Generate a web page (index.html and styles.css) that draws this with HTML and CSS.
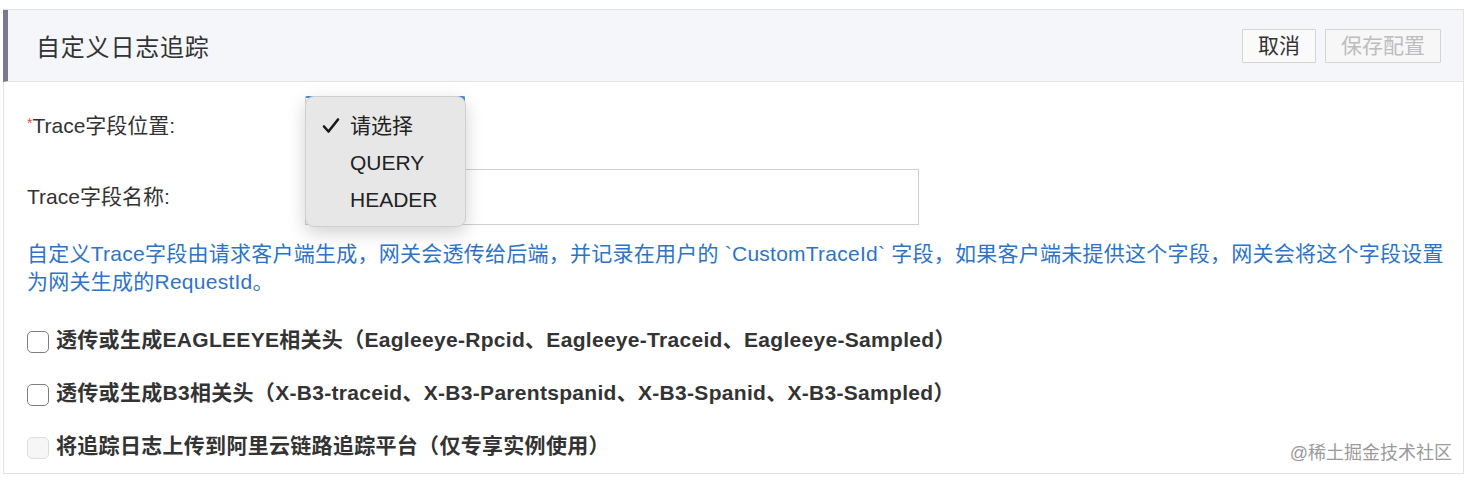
FILE: index.html
```html
<!DOCTYPE html>
<html lang="zh-CN">
<head>
<meta charset="utf-8">
<title>自定义日志追踪</title>
<link rel="stylesheet" href="styles.css">
</head>
<body>
<div class="panel">
  <div class="panel-header">
    <h2 class="panel-title">自定义日志追踪</h2>
    <div class="actions">
      <button class="btn">取消</button>
      <button class="btn" disabled>保存配置</button>
    </div>
  </div>
  <div class="panel-body">
    <div class="form-row row-select">
      <label class="form-label"><span class="req">*</span>Trace字段位置:</label>
      <div class="select-wrap">
        <div class="select"></div>
        <ul class="menu">
          <li class="menu-item checked">
            <svg class="check" viewBox="0 0 20 20" width="20" height="20"><path d="M3 10.5 L7.5 15.5 L17 3.5" fill="none" stroke="#1a1a1a" stroke-width="2.6" stroke-linecap="round" stroke-linejoin="round"/></svg>
            <span>请选择</span>
          </li>
          <li class="menu-item"><span>QUERY</span></li>
          <li class="menu-item"><span>HEADER</span></li>
        </ul>
      </div>
    </div>
    <div class="form-row row-input">
      <label class="form-label">Trace字段名称:</label>
      <div class="input"></div>
    </div>
    <p class="help">自定义Trace字段由请求客户端生成，网关会透传给后端，并记录在用户的 `CustomTraceId` 字段，如果客户端未提供这个字段，网关会将这个字段设置为网关生成的RequestId。</p>
    <div class="checks">
      <label class="check-row"><span class="box"></span><span class="check-text">透传或生成EAGLEEYE相关头（Eagleeye-Rpcid、Eagleeye-Traceid、Eagleeye-Sampled）</span></label>
      <label class="check-row"><span class="box"></span><span class="check-text">透传或生成B3相关头（X-B3-traceid、X-B3-Parentspanid、X-B3-Spanid、X-B3-Sampled）</span></label>
      <label class="check-row disabled"><span class="box"></span><span class="check-text">将追踪日志上传到阿里云链路追踪平台（仅专享实例使用）</span></label>
    </div>
    <div class="watermark">@稀土掘金技术社区</div>
  </div>
</div>
</body>
</html>
```

FILE: styles.css
```css
* { box-sizing: border-box; }
body {
  margin: 0;
  background: #fff;
  font-family: "Liberation Sans", "Noto Sans CJK SC", sans-serif;
  color: #333;
}
.panel {
  margin: 9px 0 0 3px;
  width: 1461px;
  border: 1px solid #e3e3e3;
}
.panel-header {
  height: 72px;
  background: #f5f6f9;
  border-left: 5px solid #7b798d;
  margin-left: -1px;
  border-bottom: 1px solid #e2e3e6;
  display: flex;
  align-items: center;
  justify-content: space-between;
  padding: 0 22px 0 28px;
}
.panel-title {
  margin: 0;
  font-size: 24px;
  font-weight: normal;
  color: #333;
  letter-spacing: 0.8px;
}
.actions { display: flex; gap: 9px; margin-top: 1px; }
.btn {
  height: 34px;
  padding: 0 15px;
  font-family: inherit;
  font-size: 21px;
  line-height: 32px;
  color: #333;
  background: #fafafa;
  border: 1px solid #d4d4d4;
  border-radius: 1px;
}
.btn[disabled] { color: #bdbdbd; background: #f7f7f7; }
.panel-body {
  position: relative;
  padding: 14px 6px 13px 23px;
}
.form-row {
  display: grid;
  grid-template-columns: 278px 1fr;
  align-items: center;
}
.form-label { font-size: 21px; color: #333; line-height: 28px; }
.req { color: #e5484d; font-size: 14px; vertical-align: 5px; }
.row-select { height: 57px; }
.row-input { height: 56px; margin-top: 16px; }
.select-wrap { position: relative; height: 57px; }
.select {
  width: 160px;
  height: 57px;
  border: 1px solid #d0d0d0;
  border-right: 2px solid #4b8ed1;
  border-top: 2px solid #4b8ed1;
  border-radius: 2px;
}
.menu {
  position: absolute;
  left: 0;
  top: 0;
  width: 161px;
  height: 131px;
  margin: 0;
  padding: 10px 0 0;
  list-style: none;
  background: #e7e7e7;
  border: 1px solid #cfcfcf;
  border-radius: 9px;
  box-shadow: 0 6px 18px rgba(0, 0, 0, 0.18);
}
.menu-item {
  height: 37px;
  line-height: 37px;
  font-size: 21px;
  color: #222;
  padding-left: 44px;
  position: relative;
}
.check { position: absolute; left: 15px; top: 9px; }
.input {
  width: 614px;
  height: 56px;
  border: 1px solid #cfcfcf;
  background: #fff;
}
.help {
  margin: 15px 0 0;
  width: 1432px;
  font-size: 21px;
  line-height: 28px;
  color: #2d74c8;
  letter-spacing: 0.25px;
}
.checks {
  margin-top: 30px;
  display: flex;
  flex-direction: column;
  gap: 25px;
}
.check-row { display: flex; align-items: center; height: 28px; }
.box {
  width: 22px;
  height: 22px;
  border: 1.5px solid #7f7f7f;
  border-radius: 5px;
  background: #fff;
  margin: 3px 7px 0 0;
  flex: none;
}
.check-text { font-size: 21px; font-weight: bold; color: #333; line-height: 28px; letter-spacing: 0.3px; }
.disabled .box { border-color: #dcdcdc; background: #f6f6f6; }
.watermark {
  position: absolute;
  right: 11px;
  bottom: 8px;
  font-size: 18px;
  color: #9a9a9a;
  line-height: 24px;
}
```
